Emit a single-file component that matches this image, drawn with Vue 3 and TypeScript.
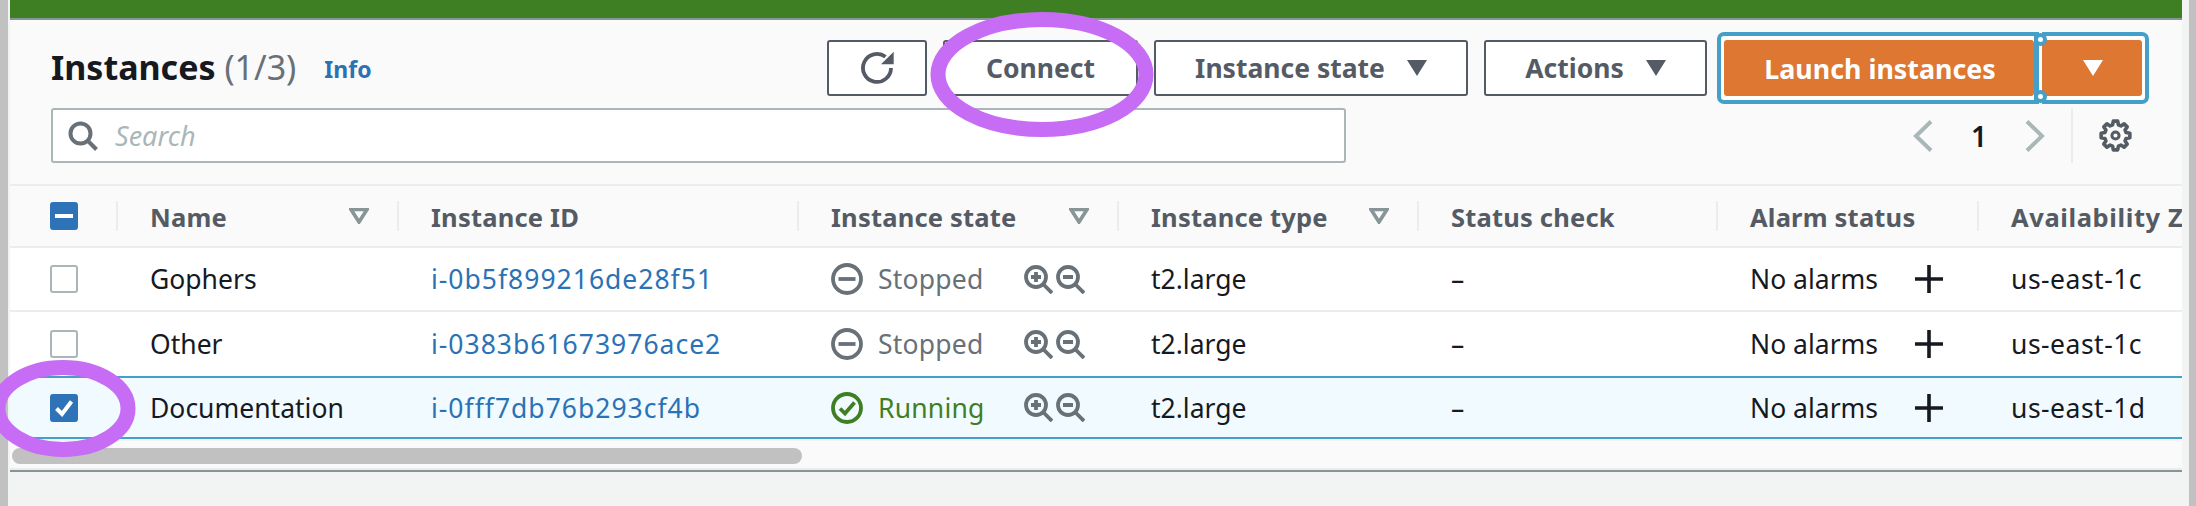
<script setup lang="ts">
interface Row {
  name: string
  id: string
  state: 'Stopped' | 'Running'
  zone: string
  selected: boolean
}

const columns = [
  { label: 'Name', sort: true },
  { label: 'Instance ID', sort: false },
  { label: 'Instance state', sort: true },
  { label: 'Instance type', sort: true },
  { label: 'Status check', sort: false },
  { label: 'Alarm status', sort: false },
  { label: 'Availability Zone', sort: false }
]

const rows: Row[] = [
  { name: 'Gophers', id: 'i-0b5f899216de28f51', state: 'Stopped', zone: 'us-east-1c', selected: false },
  { name: 'Other', id: 'i-0383b61673976ace2', state: 'Stopped', zone: 'us-east-1c', selected: false },
  { name: 'Documentation', id: 'i-0fff7db76b293cf4b', state: 'Running', zone: 'us-east-1d', selected: true }
]

// eight toothed outline for the preferences icon
function gearPath(cx: number, cy: number, outer: number, inner: number): string {
  const pts: string[] = []
  for (let i = 0; i < 8; i++) {
    const a = (i * Math.PI) / 4 - Math.PI / 2
    const steps: [number, number][] = [
      [-0.27, inner],
      [-0.15, outer],
      [0.15, outer],
      [0.27, inner]
    ]
    for (const [d, r] of steps) {
      const x = cx + r * Math.cos(a + d)
      const y = cy + r * Math.sin(a + d)
      pts.push(`${x.toFixed(2)} ${y.toFixed(2)}`)
    }
  }
  return `M${pts.join('L')}Z`
}

const gear = gearPath(16.5, 16.5, 14.5, 11)
</script>

<template>
  <div class="page">
    <div class="strip-left"></div>
    <main class="main">
      <div class="green"></div>
      <section class="head">
        <div class="top-row">
          <h1 class="title">Instances <span class="count">(1/3)</span></h1>
          <a class="info">Info</a>
          <div class="actions">
            <button class="btn btn-refresh" aria-label="Refresh">
              <svg width="34" height="34" viewBox="0 0 34 34" fill="none">
                <path d="M25.5 5.8A14 14 0 1 0 31 17" stroke="#545b64" stroke-width="3.8" />
                <path d="M21 13.3h12.7V.7z" fill="#545b64" />
              </svg>
            </button>
            <button class="btn btn-connect">Connect</button>
            <button class="btn btn-state">Instance state <i class="tri"></i></button>
            <button class="btn btn-actions">Actions <i class="tri"></i></button>
            <div class="launch">
              <button class="primary primary-main">Launch instances</button>
              <span class="split"></span>
              <button class="primary primary-drop" aria-label="Launch options"><i class="tri tri-white"></i></button>
            </div>
          </div>
        </div>
        <div class="search-row">
          <div class="search">
            <svg width="30" height="30" viewBox="0 0 30 30" fill="none">
              <circle cx="12.5" cy="12.5" r="10" stroke="#687078" stroke-width="4" />
              <path d="M19.5 19.5l9 9" stroke="#687078" stroke-width="4" />
            </svg>
            <span class="placeholder">Search</span>
          </div>
          <div class="pager">
            <svg width="20" height="32" viewBox="0 0 20 32" fill="none">
              <path d="M18 1.5L3 16l15 14.5" stroke="#aab7b8" stroke-width="4" />
            </svg>
            <span class="page-no">1</span>
            <svg width="20" height="32" viewBox="0 0 20 32" fill="none">
              <path d="M2 1.5L17 16 2 30.5" stroke="#aab7b8" stroke-width="4" />
            </svg>
          </div>
          <div class="prefs">
            <svg width="33" height="33" viewBox="0 0 33 33" fill="none" stroke="#545b64" stroke-width="3.6">
              <path :d="gear" stroke-linejoin="round" />
              <circle cx="16.5" cy="16.5" r="3.6" stroke-width="3" />
            </svg>
          </div>
        </div>
      </section>

      <section class="table">
        <div class="tr th-row">
          <div class="cell check-cell">
            <span class="check check-on">
              <i class="minus"></i>
            </span>
          </div>
          <div v-for="col in columns" :key="col.label" class="cell th">
            <span class="th-label">{{ col.label }}</span>
            <svg v-if="col.sort" class="sort" width="20" height="16" viewBox="0 0 20 16" fill="none">
              <path d="M2 1.5h16L10 14z" stroke="#879596" stroke-width="3.6" />
            </svg>
          </div>
        </div>
        <div v-for="row in rows" :key="row.id" class="tr td-row" :class="{ selected: row.selected }">
          <div class="cell check-cell">
            <span class="check" :class="{ 'check-on': row.selected }">
              <svg v-if="row.selected" width="20" height="18" viewBox="0 0 20 18" fill="none">
                <path d="M2.5 9.5l5.5 5.5L17.5 2.5" stroke="#fff" stroke-width="4" />
              </svg>
            </span>
          </div>
          <div class="cell">{{ row.name }}</div>
          <div class="cell link">{{ row.id }}</div>
          <div class="cell state-cell">
            <span class="state" :class="row.state === 'Running' ? 'running' : 'stopped'">
              <svg width="32" height="32" viewBox="0 0 32 32" fill="none" stroke="currentColor" stroke-width="3.8">
                <circle cx="16" cy="16" r="14" />
                <path v-if="row.state === 'Stopped'" d="M7.5 16h17" />
                <path v-else d="M9 16.5l5 5 9.5-11" />
              </svg>
              {{ row.state }}
            </span>
            <span class="zooms">
              <svg width="29" height="29" viewBox="0 0 29 29" fill="none" stroke="#687078" stroke-width="3.8">
                <circle cx="12" cy="12" r="10" />
                <path d="M19 19l9 9M12 7v10M7 12h10" />
              </svg>
              <svg width="29" height="29" viewBox="0 0 29 29" fill="none" stroke="#687078" stroke-width="3.8">
                <circle cx="12" cy="12" r="10" />
                <path d="M19 19l9 9M7 12h10" />
              </svg>
            </span>
          </div>
          <div class="cell">t2.large</div>
          <div class="cell">–</div>
          <div class="cell alarm-cell">
            <span class="alarm-label">No alarms</span>
            <svg width="28" height="28" viewBox="0 0 28 28" fill="none" stroke="#16191f" stroke-width="3.6">
              <path d="M14 0v28M0 14h28" />
            </svg>
          </div>
          <div class="cell zone">{{ row.zone }}</div>
        </div>
      </section>

      <div class="scroll-track"><div class="scroll-thumb"></div></div>
      <div class="foot"></div>
    </main>
    <div class="strip-right"></div>

    <!-- hand drawn marks on top of the screenshot -->
    <svg class="marks" width="2196" height="506" viewBox="0 0 2196 506" fill="none" stroke="#c76cf5" stroke-width="15">
      <ellipse cx="1042" cy="74.5" rx="104" ry="55" />
      <ellipse cx="63" cy="408.5" rx="65" ry="41" />
    </svg>
  </div>
</template>

<style scoped>
.page {
  position: relative;
  display: flex;
  width: 2196px;
  height: 506px;
  overflow: hidden;
  background: #f2f3f3;
  font-family: 'Noto Sans', sans-serif;
  font-size: 26.5px;
  color: #16191f;
}
.strip-left {
  flex: none;
  width: 10px;
  background: #f2f3f3;
  border-left: 8px solid #c1c1c1;
  box-sizing: border-box;
}
.strip-right {
  flex: none;
  width: 14px;
  background: #f2f3f3;
  border-right: 7px solid #c1c1c1;
  box-sizing: border-box;
}
.main {
  flex: none;
  width: 2172px;
  min-width: 0;
  overflow: hidden;
}
.green {
  height: 18px;
  background: #3f7f24;
  border-bottom: 2px solid #879596;
}
.head {
  height: 166px;
  box-sizing: border-box;
  background: #fafafa;
  padding: 12px 33px 0 41px;
  border-bottom: 2px solid #eaeded;
}
.top-row {
  display: flex;
  align-items: center;
  height: 72px;
}
.title {
  margin: -2px 0 0;
  font-size: 34px;
  font-weight: 700;
  white-space: nowrap;
}
.count {
  font-weight: 400;
  color: #687078;
}
.info {
  margin-left: 28px;
  margin-top: 2px;
  font-size: 23px;
  font-weight: 700;
  color: #2a72b5;
}
.actions {
  display: flex;
  align-items: center;
  margin-left: auto;
}
.btn {
  display: flex;
  align-items: center;
  justify-content: center;
  gap: 22px;
  height: 56px;
  margin: 0 16px 0 0;
  padding: 0;
  border: 2.5px solid #545b64;
  border-radius: 3px;
  background: #fff;
  font: 700 26.5px 'Noto Sans', sans-serif;
  color: #545b64;
}
.btn-refresh {
  width: 100px;
}
.btn-connect {
  width: 195px;
}
.btn-state {
  width: 314px;
}
.btn-actions {
  width: 223px;
  margin-right: 10px;
}
.tri {
  display: block;
  width: 0;
  height: 0;
  border-left: 10px solid transparent;
  border-right: 10px solid transparent;
  border-top: 16px solid #545b64;
}
.tri-white {
  border-top-color: #fff;
}
.launch {
  position: relative;
  display: flex;
  box-sizing: border-box;
  height: 72px;
  padding: 4px 3px;
  border: 4px solid #44a0c8;
  border-radius: 7px;
  background: #fff;
}
.primary {
  display: flex;
  align-items: center;
  justify-content: center;
  height: 56px;
  border: 0;
  border-radius: 3px;
  padding: 0 0 0 2px;
  background: #dd7731;
  color: #fff;
  font: 700 26.8px 'Noto Sans', sans-serif;
}
.primary-main {
  width: 310px;
}
.primary-drop {
  width: 100px;
}
.split {
  position: relative;
  flex: none;
  width: 8px;
  margin: -8px 0;
  background: linear-gradient(90deg, #44a0c8 5px, #fff 5px);
}
.split::before,
.split::after {
  content: '';
  position: absolute;
  left: 0;
  box-sizing: border-box;
  width: 13px;
  height: 13px;
  border: 4px solid #44a0c8;
  border-radius: 50%;
  background: #fff;
}
.split::before {
  top: 1px;
}
.split::after {
  bottom: 1px;
}
.search-row {
  display: flex;
  align-items: center;
  margin-top: 4px;
  height: 55px;
}
.search {
  display: flex;
  align-items: center;
  gap: 17px;
  box-sizing: border-box;
  width: 1295px;
  height: 55px;
  padding-left: 15px;
  border: 2px solid #aab7b8;
  border-radius: 3px;
  background: #fff;
}
.placeholder {
  font-style: italic;
  font-size: 27px;
  color: #aab7b8;
}
.pager {
  display: flex;
  align-items: center;
  gap: 33px;
  margin-left: auto;
  margin-right: 26px;
}
.page-no {
  width: 26px;
  text-align: center;
  font-weight: 600;
  font-size: 28px;
}
.prefs {
  display: flex;
  align-items: center;
  box-sizing: border-box;
  height: 55px;
  padding: 0 0 0 26px;
  border-left: 2px solid #eaeded;
  margin-right: 17px;
}
.tr {
  display: grid;
  box-sizing: border-box;
  grid-template-columns: 107px 281px 400px 320px 300px 299px 261px 204px;
}
.cell {
  display: flex;
  align-items: center;
  box-sizing: border-box;
  padding-left: 33px;
  min-width: 0;
  white-space: nowrap;
}
.check-cell {
  padding-left: 40px;
}
.th-row {
  height: 62px;
  background: #fafafa;
  border-bottom: 2px solid #eaeded;
}
.th {
  position: relative;
  padding-top: 1px;
  font-weight: 700;
  font-size: 25.5px;
  letter-spacing: 0.2px;
  color: #545b64;
}
.th:last-child {
  letter-spacing: 0.6px;
}
.th::before {
  content: '';
  position: absolute;
  left: -1px;
  top: 15px;
  width: 2px;
  height: 30px;
  background: #eaeded;
}
.sort {
  position: absolute;
  right: 29px;
  top: 22px;
}
.td-row {
  height: 64px;
  background: #fff;
  border-bottom: 2px solid #eaeded;
}
.td-row:nth-child(3) {
  border-bottom: 0;
}
.td-row.selected {
  height: 63px;
  background: #f1faff;
  border-top: 2px solid #44a0c8;
  border-bottom: 2px solid #44a0c8;
}
.check {
  display: flex;
  align-items: center;
  justify-content: center;
  box-sizing: border-box;
  width: 28px;
  height: 28px;
  border: 2px solid #aab7b8;
  border-radius: 3px;
  background: #fff;
}
.check-on {
  border-color: #2e73b8;
  background: #2e73b8;
}
.minus {
  display: block;
  width: 18px;
  height: 4px;
  background: #fff;
}
.link {
  color: #2a72b5;
  letter-spacing: 1px;
}
.zone {
  letter-spacing: 0.5px;
}
.state-cell {
  justify-content: space-between;
  padding-right: 33px;
}
.state {
  display: flex;
  align-items: center;
  gap: 15px;
  letter-spacing: 0.2px;
}
.stopped {
  color: #687078;
}
.running {
  color: #3f7f24;
}
.zooms {
  display: flex;
  gap: 3px;
}
.alarm-cell {
  gap: 37px;
}
.scroll-track {
  height: 29px;
  box-sizing: border-box;
  padding: 7px 0 0 2px;
  background: #fafafa;
  border-top: 2px solid #f2f3f3;
}
.scroll-thumb {
  width: 790px;
  height: 16px;
  border-radius: 8px;
  background: #c1c1c1;
}
.foot {
  height: 4px;
  background: #879596;
  border-top: 2px solid #eaeded;
  box-sizing: border-box;
}
.marks {
  position: absolute;
  left: 0;
  top: 0;
  pointer-events: none;
}
</style>

<style>
html,
body {
  margin: 0;
  background: #f2f3f3;
}
</style>
